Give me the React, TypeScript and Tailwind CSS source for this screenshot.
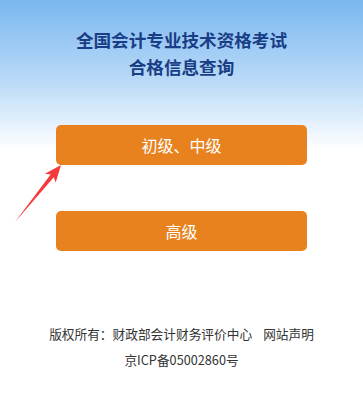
import React from "react";

const levels = ["初级、中级", "高级"];

export default function App() {
  return (
    <div
      className="relative min-h-[394px] w-full bg-white bg-[linear-gradient(180deg,#7ab7f0_0px,#b9d9f7_80px,#ffffff_150px)] text-center"
      style={{ fontFamily: '"Noto Sans CJK SC", "Noto Sans", sans-serif' }}
    >
      <div className="pt-[26px] text-[17.6px] font-bold leading-[27px] text-[#193e85]">
        <div>全国会计专业技术资格考试</div>
        <div>合格信息查询</div>
      </div>

      <div className="mt-[45px] flex flex-col items-center gap-[46px]">
        {levels.map((label) => (
          <button
            key={label}
            className="h-[40px] w-[251px] rounded-[5px] bg-[#e8821e] text-[16px] text-white"
          >
            {label}
          </button>
        ))}
      </div>

      <div className="mt-[70px] text-[12.7px] leading-[26px] text-[#333333]">
        <div>
          版权所有：财政部会计财务评价中心<span className="ml-[11px]">网站声明</span>
        </div>
        <div>京ICP备05002860号</div>
      </div>

      {/* red annotation arrow pointing at first button */}
      <svg
        className="absolute left-0 top-0"
        width="80"
        height="240"
        viewBox="0 0 80 240"
      >
        <polygon
          points="15,222 53.8,177.2 55.7,182.6 61,165 44.9,173.8 50.6,174.6"
          fill="#f43a3a"
        />
      </svg>
    </div>
  );
}
